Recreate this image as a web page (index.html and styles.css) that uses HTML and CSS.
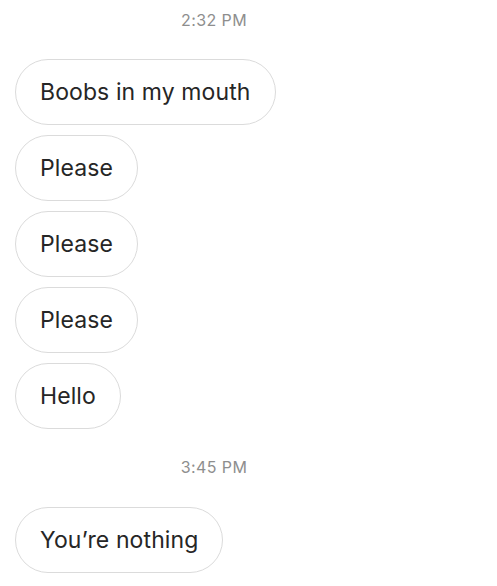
FILE: index.html
```html
<!DOCTYPE html>
<html>
<head>
<meta charset="utf-8">
<link rel="stylesheet" href="styles.css">
</head>
<body>
<div class="thread">
  <div class="time first">2:32 PM</div>
  <div class="group">
    <div class="bubble">Boobs in my mouth</div>
    <div class="bubble">Please</div>
    <div class="bubble">Please</div>
    <div class="bubble">Please</div>
    <div class="bubble">Hello</div>
  </div>
  <div class="time second">3:45 PM</div>
  <div class="group">
    <div class="bubble">You’re nothing</div>
  </div>
</div>
</body>
</html>
```

FILE: styles.css
```css
html, body {
  margin: 0;
  padding: 0;
  background: #ffffff;
}
body {
  font-family: Inter, "Liberation Sans", Arial, sans-serif;
  color: #262626;
}
.thread {
  width: 428px;
}
.time {
  text-align: center;
  font-size: 16px;
  letter-spacing: 0.4px;
  line-height: 18px;
  color: #8e8e8e;
}
.time.first {
  margin-top: 11px;
  margin-bottom: 30px;
}
.time.second {
  margin-top: 29px;
  margin-bottom: 31px;
}
.group {
  display: flex;
  flex-direction: column;
  align-items: flex-start;
  gap: 10px;
  padding-left: 15px;
}
.bubble {
  height: 66px;
  box-sizing: border-box;
  display: flex;
  align-items: center;
  padding: 0 24px;
  border: 1px solid #dbdbdb;
  border-radius: 33px;
  font-size: 23px;
  letter-spacing: 0.1px;
  line-height: 28px;
  white-space: nowrap;
}
```
